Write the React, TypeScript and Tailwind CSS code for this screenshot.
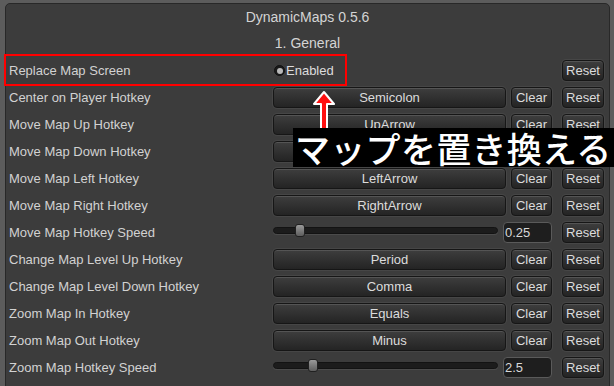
import React from "react";

const font = { fontFamily: '"Liberation Sans", Arial, sans-serif' };

function Btn({ children, w }: { children: React.ReactNode; w: string }) {
  return (
    <div
      className={`${w} h-[21px] flex items-center justify-center rounded-[4px] border border-[#161616] bg-gradient-to-b from-[#3e3e3e] to-[#242424] shadow-[inset_0_1px_0_rgba(255,255,255,0.12),0_0_0_1px_rgba(90,90,90,0.35)] text-[13px] text-[#dcdcdc] leading-none`}
    >
      {children}
    </div>
  );
}

function KeyRow({ label, value }: { label: string; value: string }) {
  return (
    <div className="h-[27px] flex items-center">
      <div className="w-[267px] pl-[3px] text-[13px] text-[#d2d2d2]">{label}</div>
      <Btn w="w-[233px]">{value}</Btn>
      <div className="ml-[5px]">
        <Btn w="w-[41px]">Clear</Btn>
      </div>
      <div className="ml-[10px]">
        <Btn w="w-[42px]">Reset</Btn>
      </div>
    </div>
  );
}

function SliderRow({ label, value, thumb }: { label: string; value: string; thumb: number }) {
  return (
    <div className="h-[27px] flex items-center">
      <div className="w-[267px] pl-[3px] text-[13px] text-[#d2d2d2]">{label}</div>
      <div className="relative w-[225px] h-[27px]">
        <div className="absolute left-0 right-0 top-[8px] h-[7px] rounded-full bg-[#1c1c1c] border border-[#131313] shadow-[0_1px_0_rgba(255,255,255,0.08)]" />
        <div
          className="absolute top-[5px] w-[10px] h-[13px] rounded-[3px] border border-[#202020] bg-gradient-to-b from-[#9a9a9a] to-[#5e5e5e]"
          style={{ left: thumb }}
        />
      </div>
      <div className="ml-[5px] w-[49px] h-[21px] rounded-[4px] border border-[#5a5a5a] bg-[#1e1e1e] flex items-center pl-[1px] text-[13px] text-[#d8d8d8]">
        {value}
      </div>
      <div className="ml-[10px]">
        <Btn w="w-[42px]">Reset</Btn>
      </div>
    </div>
  );
}

export default function App() {
  return (
    <div className="relative w-[614px] h-[386px] overflow-hidden bg-[#5c5c5c] pl-[5px] pt-[3px] pr-[4px]" style={font}>
      <div className="h-[400px] bg-[#3c3c3c] border border-[#282828] rounded-t-[5px]">
        <div className="h-[26px] flex items-center justify-center text-[14px] text-[#d4d4d4]">DynamicMaps 0.5.6</div>
        <div className="h-[27px] flex items-center justify-center text-[14px] text-[#d4d4d4]">1. General</div>
        <div className="h-[27px] flex items-center">
          <div className="w-[267px] pl-[3px] text-[13px] text-[#d2d2d2]">Replace Map Screen</div>
          <div className="flex items-center w-[289px]">
            <div className="ml-[1px] w-[11px] h-[11px] rounded-full bg-[#1a1a1a] border border-[#111] flex items-center justify-center">
              <div className="w-[6px] h-[6px] rounded-full bg-[#b8b8b8]" />
            </div>
            <span className="ml-[1px] text-[13px] text-[#dcdcdc]">Enabled</span>
          </div>
          <Btn w="w-[42px]">Reset</Btn>
        </div>
        <KeyRow label="Center on Player Hotkey" value="Semicolon" />
        <KeyRow label="Move Map Up Hotkey" value="UpArrow" />
        <KeyRow label="Move Map Down Hotkey" value="DownArrow" />
        <KeyRow label="Move Map Left Hotkey" value="LeftArrow" />
        <KeyRow label="Move Map Right Hotkey" value="RightArrow" />
        <SliderRow label="Move Map Hotkey Speed" value="0.25" thumb={22} />
        <KeyRow label="Change Map Level Up Hotkey" value="Period" />
        <KeyRow label="Change Map Level Down Hotkey" value="Comma" />
        <KeyRow label="Zoom Map In Hotkey" value="Equals" />
        <KeyRow label="Zoom Map Out Hotkey" value="Minus" />
        <SliderRow label="Zoom Map Hotkey Speed" value="2.5" thumb={35} />
      </div>

      {/* red highlight box */}
      <div className="absolute left-[4px] top-[54px] w-[343px] h-[32px] border-2 border-[#ff0000]" />

      {/* arrow */}
      <svg className="absolute left-[312px] top-[90px]" width="24" height="40" viewBox="0 0 24 40">
        <path d="M12 2 L22 14 L15 14 L15 40 L9 40 L9 14 L2 14 Z" fill="#ff1010" stroke="#ffffff" strokeWidth="2" strokeLinejoin="round" />
      </svg>

      {/* caption */}
      <div
        className="absolute left-[293px] top-[128px] w-[330px] h-[39px] bg-black flex items-center pl-[2px] text-white text-[35px] font-medium leading-none tracking-[0.3px]"
        style={{ fontFamily: '"Noto Sans CJK JP", sans-serif' }}
      >
        マップを置き換える
      </div>
    </div>
  );
}
